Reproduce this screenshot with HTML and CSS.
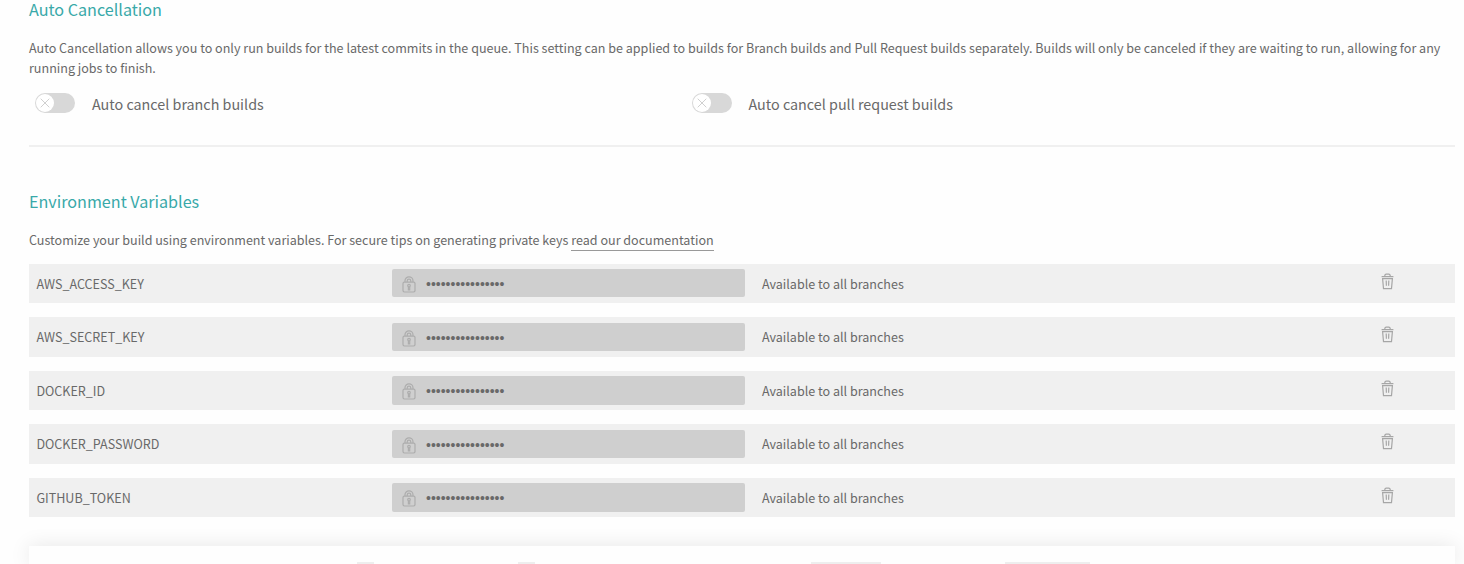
FILE: index.html
```html
<!DOCTYPE html>
<html lang="en">
<head>
<meta charset="utf-8">
<title>Settings</title>
<link rel="stylesheet" href="styles.css">
</head>
<body>
<svg class="defs" width="0" height="0">
  <symbol id="lock" viewBox="0 0 14 17">
    <g fill="none" stroke="#adadad" stroke-width="1.2">
      <rect x="1" y="6.2" width="12" height="9.8" rx="1.4"/>
      <path d="M3 6V4.8a4 4 0 0 1 8 0V6M5.2 6V4.9a1.8 1.8 0 0 1 3.6 0V6"/>
      <circle cx="7" cy="9.6" r="1.3"/>
      <path d="M6.4 11v2.8h1.3V11"/>
    </g>
  </symbol>
  <symbol id="trash" viewBox="0 0 13 17">
    <g fill="none" stroke="#a6a6a6" stroke-width="1.2">
      <path d="M.6 3.6h11.8M3.8 3.4v-.8A1.5 1.5 0 0 1 5.3 1.2h2.4a1.5 1.5 0 0 1 1.5 1.4v.8"/>
      <path d="M1.6 5.6h9.8l-.9 10h-8zM5.2 7.4l.2 5.4M7.8 7.4l-.2 5.4"/>
    </g>
  </symbol>
</svg>
<main class="settings">
  <section class="cancellation">
    <h2 class="title">Auto Cancellation</h2>
    <p class="text">Auto Cancellation allows you to only run builds for the latest commits in the queue. This setting can be applied to builds for Branch builds and Pull Request builds separately. Builds will only be canceled if they are waiting to run, allowing for any<br>running jobs to finish.</p>
    <div class="switches">
      <div class="switch"><span class="track"><span class="knob"><svg width="10" height="10" viewBox="0 0 10 10"><path d="M.7.7l8.6 8.6M9.3.7L.7 9.3" stroke="#d0d0d0" stroke-width="1"/></svg></span></span><span class="switch-label">Auto cancel branch builds</span></div>
      <div class="switch"><span class="track"><span class="knob"><svg width="10" height="10" viewBox="0 0 10 10"><path d="M.7.7l8.6 8.6M9.3.7L.7 9.3" stroke="#d0d0d0" stroke-width="1"/></svg></span></span><span class="switch-label">Auto cancel pull request builds</span></div>
    </div>
  </section>
  <section class="environment">
    <h2 class="title">Environment Variables</h2>
    <p class="text intro">Customize your build using environment variables. For secure tips on generating private keys <a class="link">read our documentation</a></p>
    <div class="rows">
      <div class="row"><span class="name">AWS_ACCESS_KEY</span><span class="value"><svg class="lock"><use href="#lock"/></svg><span class="dots">••••••••••••••••</span></span><span class="branches">Available to all branches</span><svg class="trash"><use href="#trash"/></svg></div>
      <div class="row"><span class="name">AWS_SECRET_KEY</span><span class="value"><svg class="lock"><use href="#lock"/></svg><span class="dots">••••••••••••••••</span></span><span class="branches">Available to all branches</span><svg class="trash"><use href="#trash"/></svg></div>
      <div class="row"><span class="name">DOCKER_ID</span><span class="value"><svg class="lock"><use href="#lock"/></svg><span class="dots">••••••••••••••••</span></span><span class="branches">Available to all branches</span><svg class="trash"><use href="#trash"/></svg></div>
      <div class="row"><span class="name">DOCKER_PASSWORD</span><span class="value"><svg class="lock"><use href="#lock"/></svg><span class="dots">••••••••••••••••</span></span><span class="branches">Available to all branches</span><svg class="trash"><use href="#trash"/></svg></div>
      <div class="row"><span class="name">GITHUB_TOKEN</span><span class="value"><svg class="lock"><use href="#lock"/></svg><span class="dots">••••••••••••••••</span></span><span class="branches">Available to all branches</span><svg class="trash"><use href="#trash"/></svg></div>
    </div>
    <div class="form">
      <span class="edge edge-a"></span><span class="edge edge-b"></span><span class="edge edge-c"></span><span class="edge edge-d"></span>
    </div>
  </section>
</main>
</body>
</html>
```
FILE: styles.css
```css
* { box-sizing: border-box; }
body {
  margin: 0;
  height: 564px;
  overflow: hidden;
  background: #fefefe;
  color: #696969;
  font-family: "Noto Sans CJK SC", "Noto Sans", sans-serif;
  font-size: 12.55px;
}
.defs { display: block; height: 0; }
.settings { padding: 0 9px 0 29px; }
.cancellation { height: 147px; border-bottom: 2px solid #f0f0f0; }
.title {
  margin: 0;
  color: #39a9a9;
  font-size: 16.15px;
  font-weight: 400;
  line-height: 18px;
  white-space: nowrap;
}
.text { margin: 20px 0 0; line-height: 20px; white-space: nowrap; }
.switches { display: grid; grid-template-columns: 656.5px 1fr; padding: 15px 0 0 6px; }
.switch { display: flex; align-items: center; gap: 17px; height: 20px; }
.track { width: 40px; height: 20px; padding: 1px; border-radius: 10px; background: #d8d8d8; }
.knob {
  display: flex;
  align-items: center;
  justify-content: center;
  width: 18px;
  height: 18px;
  border-radius: 50%;
  background: #fff;
}
.switch-label { font-size: 14.34px; line-height: 20px; padding-top: 2px; }
.environment { padding-top: 45px; }
.link { display: inline-block; height: 21px; border-bottom: 1px solid #999; }
.intro { height: 20px; }
.rows { display: grid; gap: 13.95px; padding-top: 13.75px; }
.row { display: flex; height: 39.6px; background: #f0f0f0; line-height: 40px; }
.name { width: 363px; padding-left: 7.4px; }
.value {
  display: flex;
  width: 353px;
  height: 28.4px;
  margin-top: 5.3px;
  padding-left: 10px;
  border-radius: 2px;
  background: #cfcfcf;
}
.lock { width: 14px; height: 17px; margin-top: 7px; }
.dots { margin-left: 10px; font: 14px/30px "Liberation Sans", sans-serif; }
.branches { width: 636px; padding-left: 17px; }
.trash { width: 13px; height: 17px; margin-top: 8.8px; }
.form {
  display: flex;
  height: 18px;
  margin-top: 28.4px;
  padding-top: 16px;
  background: #fefefe;
  box-shadow: 0 0 20px rgba(0, 0, 0, .1);
}
.edge { height: 2px; background: #eee; }
.edge-a { width: 17px; margin-left: 328px; }
.edge-b { width: 17px; margin-left: 144px; }
.edge-c { width: 70px; margin-left: 276px; }
.edge-d { width: 85px; margin-left: 124px; }
```
